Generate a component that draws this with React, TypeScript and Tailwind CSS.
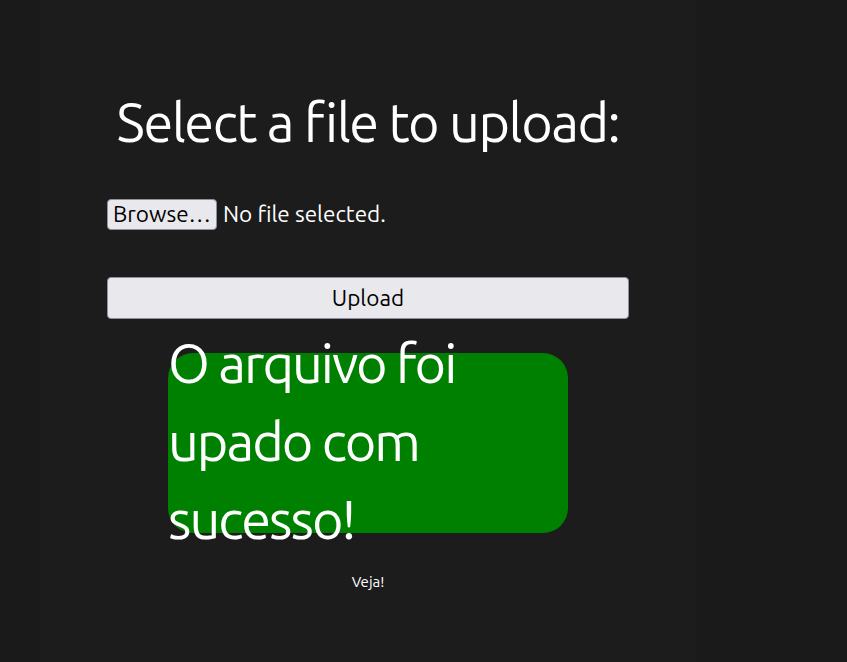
const font = "font-['Ubuntu','Noto_Sans',sans-serif]";

const FilePicker = () => {
    return (
        <div className="flex items-center h-[31px]">
            <button
                type="button"
                className="h-[31px] px-[5px] rounded-[4px] border border-[#8f8f9d] bg-[#e9e9ed] text-black text-[22.5px] leading-none"
            >
                Browse…
            </button>
            <span className="ml-[6px] text-[22.5px] text-white leading-none">No file selected.</span>
        </div>
    );
};

export default function App() {
    return (
        <div className={`min-h-screen bg-[#1a1a1a] ${font}`}>
            <div className="ml-[40px] w-[656px] min-h-screen bg-[#1c1c1c] flex flex-col items-center">
                <h1 className="mt-[92px] text-[54px] leading-[60px] tracking-[-1.5px] text-white">
                    Select a file to upload:
                </h1>

                <form className="w-[522px] mt-[47px] flex flex-col" onSubmit={(e) => e.preventDefault()}>
                    <FilePicker />
                    <button
                        type="submit"
                        className="mt-[47px] h-[42px] w-full rounded-[4px] border border-[#8f8f9d] bg-[#e9e9ed] text-black text-[22.5px]"
                    >
                        Upload
                    </button>
                </form>

                <div className="mt-[34px] w-[400px] h-[180px] rounded-[25px] bg-[#008000]">
                    <p className="-mt-[29px] text-[54px] leading-[78px] tracking-[-2px] text-white">
                        O arquivo foi upado com sucesso!
                    </p>
                </div>

                <p className="mt-[38px] text-[15px] text-white">Veja!</p>
            </div>
        </div>
    );
}
